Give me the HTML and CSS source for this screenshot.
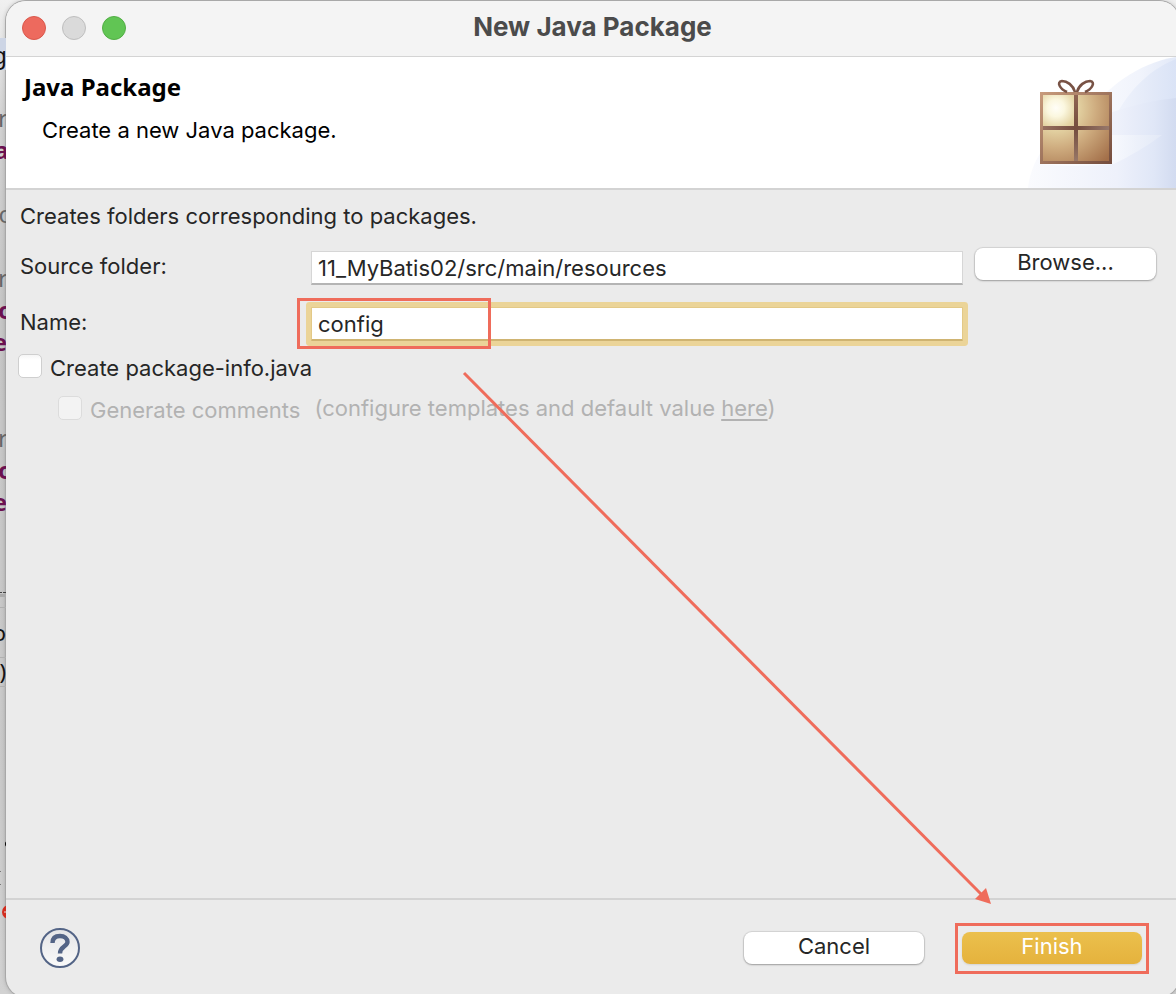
FILE: index.html
```html
<!DOCTYPE html>
<html lang="en">
<head>
<meta charset="utf-8">
<title>New Java Package</title>
<link rel="stylesheet" href="styles.css">
</head>
<body>
<svg class="editor-edge" width="6" height="994" aria-hidden="true">
  <rect class="edge-current" y="38" width="6" height="32"/>
  <rect class="edge-tab" y="594" width="6" height="3"/>
  <path class="edge-rule" d="M0 607.500H6M0 657.500H6M0 686.500H6"/>
  <g class="edge-code" text-anchor="end">
    <text class="edge-dark" x="7" y="64">g</text>
    <text x="8" y="127">r</text>
    <text class="edge-key" x="9" y="159">a</text>
    <text x="13" y="223">o</text>
    <text x="8" y="287">r</text>
    <text class="edge-key" x="13" y="319">o</text>
    <text class="edge-key" x="7" y="351">e</text>
    <text x="8" y="447">r</text>
    <text class="edge-key" x="13" y="479">o</text>
    <text class="edge-key" x="7" y="511">e</text>
    <text class="edge-dark edge-small" x="6" y="641">o</text>
    <text class="edge-dark edge-small" x="6" y="680">)</text>
  </g>
  <path d="M0 592.500H2M3 592.500H6" stroke="#444"/>
  <circle cx="8" cy="844" r="3"/>
  <path d="M0 871.500H1M0 884.500H1" stroke="#777"/>
  <circle cx="9" cy="912" r="7" fill="#d22c1e"/>
  <path d="M4 912H6" stroke="#ddd"/>
</svg>

<main class="dialog">
  <header class="titlebar">
    <div class="lights">
      <button class="light light-close" aria-label="Close"></button>
      <button class="light light-min" aria-label="Minimize" disabled></button>
      <button class="light light-zoom" aria-label="Zoom"></button>
    </div>
    <h1 class="window-title">New Java Package</h1>
  </header>

  <section class="banner">
    <div class="banner-text">
      <h2 class="banner-title">Java Package</h2>
      <p class="banner-message">Create a new Java package.</p>
    </div>
    <svg class="banner-art" width="154" height="131" viewBox="0 0 154 131" aria-hidden="true">
      <defs>
        <linearGradient id="swoosh" gradientUnits="userSpaceOnUse" x1="6" x2="154"><stop offset="0" stop-color="#fafbfe"/><stop offset=".6" stop-color="#eef1fb"/><stop offset=".85" stop-color="#e0e7f7"/><stop offset="1" stop-color="#d2dbf0"/></linearGradient>
        <linearGradient id="arc" gradientUnits="userSpaceOnUse" x1="62" x2="154"><stop offset="0" stop-color="#fafbfe"/><stop offset=".6" stop-color="#f1f4fc"/><stop offset="1" stop-color="#e2e9f8"/></linearGradient>
        <linearGradient id="inner" gradientUnits="userSpaceOnUse" x1="90" x2="154"><stop offset="0" stop-color="#f1f4fc"/><stop offset="1" stop-color="#dae3f6"/></linearGradient>
        <linearGradient id="edge" x1="0" y1="0" x2="1" y2="1"><stop offset="0" stop-color="#c89b7c"/><stop offset="1" stop-color="#734c3d"/></linearGradient>
        <radialGradient id="shine" gradientUnits="userSpaceOnUse" cx="34" cy="51" r="72"><stop offset="0" stop-color="#fffef8"/><stop offset=".12" stop-color="#fbf7df"/><stop offset=".28" stop-color="#e5d5a5"/><stop offset=".55" stop-color="#cfad80"/><stop offset="1" stop-color="#a36f49"/></radialGradient>
        <linearGradient id="ribbonH" x1="0" x2="1"><stop offset="0" stop-color="#97705f"/><stop offset=".5" stop-color="#744c3e"/><stop offset="1" stop-color="#97786b"/></linearGradient>
        <linearGradient id="ribbonV" x1="0" x2="0" y1="0" y2="1"><stop offset="0" stop-color="#906553"/><stop offset=".5" stop-color="#744c3e"/><stop offset="1" stop-color="#977767"/></linearGradient>
        <linearGradient id="ray" gradientUnits="userSpaceOnUse" x1="20" x2="140"><stop offset="0" stop-color="#fff"/><stop offset=".6" stop-color="#f8fafe"/><stop offset="1" stop-color="#e4eaf7"/></linearGradient>
      </defs>
      <path d="M62 60C85 30 116 6 154 0V131H62Z" fill="url(#arc)"/>
      <path d="M90 66C104 37 124 14 154 2V131H90Z" fill="url(#inner)"/>
      <path d="M6 131C8 113 17 91 34 80C65 62 112 45 154 41V131Z" fill="url(#swoosh)"/>
      <path d="M80 78H140C124 90 108 99 92 107C73 109 40 110 20 107Z" fill="url(#ray)" opacity=".8"/>
      <rect x="18" y="35" width="72" height="72" fill="url(#edge)"/>
      <rect x="21" y="38" width="66" height="66" fill="url(#shine)"/>
      <rect x="21" y="69" width="66" height="4" fill="url(#ribbonH)"/>
      <rect x="52" y="38" width="4" height="66" fill="url(#ribbonV)"/>
      <path d="M53 35C51 28 45 24 40 24C34 25 38 32 45 35M55 35C57 28 63 24 68 24C74 25 70 32 63 35" fill="none" stroke="#785245" stroke-width="2.600"/>
    </svg>
  </section>

  <form class="page" onsubmit="return false">
    <p class="intro">Creates folders corresponding to packages.</p>
    <div class="fields">
      <label class="field-label" for="folder">Source folder:</label>
      <input class="text-field" id="folder" type="text" value="11_MyBatis02/src/main/resources">
      <button class="push browse" type="button">Browse...</button>
      <label class="field-label" for="name">Name:</label>
      <div class="name-cell">
        <input class="text-field focused" id="name" type="text" value="config">
        <span class="mark mark-name"></span>
      </div>
    </div>
    <div class="option">
      <input class="tick" type="checkbox" id="info">
      <label class="option-label" for="info">Create package-info.java</label>
    </div>
    <div class="option option-sub">
      <input class="tick" type="checkbox" id="comments" disabled>
      <label class="option-label" for="comments">Generate comments</label>
      <p class="hint">(configure templates and default value <a class="hint-link" href="#">here</a>)</p>
    </div>
  </form>

  <footer class="actions">
    <button class="help" aria-label="Help">
      <svg width="40" height="40" viewBox="0 0 40 40">
        <defs><linearGradient id="helpFill" x1="0" y1="0" x2="0" y2="1"><stop offset="0" stop-color="#e3e4e7"/><stop offset="1" stop-color="#fafafa"/></linearGradient></defs>
        <circle cx="20" cy="20" r="19" fill="url(#helpFill)" stroke="#536486" stroke-width="2"/>
        <path d="M12.500 15C12.500 10 15.500 8 20 8C24.500 8 27.500 10.300 27.500 14C27.500 18.500 20 18.500 20 25.500" fill="none" stroke="#536486" stroke-width="4.400"/>
        <ellipse cx="20" cy="31.300" rx="3.400" ry="2.700" fill="#536486"/>
      </svg>
    </button>
    <button class="push">Cancel</button>
    <div class="finish-cell">
      <button class="push push-default">Finish</button>
      <span class="mark mark-finish"></span>
    </div>
  </footer>
</main>

<svg class="arrow" viewBox="0 0 1176 994" preserveAspectRatio="xMinYMin meet" aria-hidden="true">
  <path d="M464 373L982 895" fill="none" stroke="#ef6c5b" stroke-width="3"/>
  <path d="M991 904L986 888L975 899Z" fill="#ef6c5b"/>
</svg>
</body>
</html>
```
FILE: styles.css
```css
* { box-sizing: border-box; }

body {
  margin: 0;
  height: 100vh;
  overflow: hidden;
  position: relative;
  padding: 1px 0 0 6px;
  background: linear-gradient(#f0f0f0, #d2d2d2 120px, #c6c6c6 300px, #cacaca 800px, #d2d2d2);
  font-family: Inter, "Liberation Sans", sans-serif;
  font-size: 22px;
  color: #262626;
}

h1, h2, p { margin: 0; }

button, input { font: inherit; color: inherit; }

.editor-edge { position: absolute; left: 0; top: 0; }
.edge-code { font: 24px "Noto Sans", sans-serif; fill: #666; }
.edge-key { font-weight: 700; fill: #6b1050; }
.edge-dark { fill: #111; }
.edge-small { font-size: 22px; }
.edge-current { fill: #cdd5e5; }
.edge-tab { fill: #aaa; }
.edge-rule { stroke: #b0b0b0; }

.dialog {
  display: flex;
  flex-direction: column;
  min-height: calc(100vh + 2px);
  margin-right: -3px;
  border-radius: 20px;
  overflow: hidden;
  background: #ebebeb;
  box-shadow: 0 0 0 1px #a8a8a8, 0 0 5px rgba(0, 0, 0, .25);
}

.titlebar {
  display: grid;
  grid-template-columns: 1fr auto 1fr;
  align-items: center;
  height: 56px;
  padding: 0 16px 2px;
  background: #f4f4f4;
  border-bottom: 1px solid #d4d4d4;
}

.lights { display: flex; gap: 16px; }

.light {
  width: 24px;
  height: 24px;
  padding: 0;
  border: 1px solid #d9584c;
  border-radius: 50%;
  background: #ed6a5e;
}
.light-min { background: #dadada; border-color: #bebebe; }
.light-zoom { background: #61c554; border-color: #52ae45; }

.window-title {
  padding-bottom: 2px;
  font-size: 26px;
  line-height: 32px;
  font-weight: 700;
  color: #4b4b4b;
}

.banner {
  display: flex;
  justify-content: space-between;
  height: 133px;
  background: #fff;
  border-bottom: 2px solid #d3d3d3;
  color: #000;
}
.banner-text { padding: 14px 18px; }
.banner-title { font: 700 24px/32px "Noto Sans", sans-serif; }
.banner-message { padding: 12px 18px; line-height: 30px; }
.banner-art { flex: none; margin-right: 3px; }

.page { flex: 1; padding: 12px 22px 12px 14px; }
.intro { line-height: 28px; margin-bottom: 18px; }

.fields {
  display: grid;
  grid-template-columns: 279px 1fr 181px;
  column-gap: 12px;
  row-gap: 19px;
  grid-auto-rows: 37px;
  padding-right: 1px;
}
.field-label { line-height: 37px; }

.text-field {
  width: 100%;
  height: 34px;
  align-self: end;
  padding: 0 6px;
  border: 1px solid #d6d6d6;
  border-bottom: 2px solid #b4b4b4;
  background: #fff;
  outline: none;
}
.name-cell { position: relative; display: flex; }
.focused {
  border: 1px solid #e3c987;
  border-bottom: 2px solid #cfb472;
  box-shadow: 0 0 0 5px #ebd498;
  border-radius: 1px;
}

.push {
  width: 180px;
  height: 32px;
  padding: 0 0 4px;
  border: 0;
  border-radius: 8px;
  background: #fff;
  line-height: 28px;
  box-shadow: 0 0 1px 1px rgba(0, 0, 0, .1), 0 1px 2px rgba(0, 0, 0, .25);
}
.browse { width: 100%; }
.push-default {
  color: #fff;
  background: linear-gradient(#ebc04d, #e5b23d);
  box-shadow: 0 1px 2px rgba(0, 0, 0, .1);
}

.option {
  display: flex;
  align-items: flex-start;
  gap: 8px;
  margin: 13px 0 0 -2px;
}
.option-label { line-height: 28px; }
.option-sub { margin: 14px 0 0 38px; color: #b2b2b2; }

.tick {
  appearance: none;
  flex: none;
  width: 24px;
  height: 24px;
  margin: 0;
  border: 1px solid #cfcfcf;
  border-radius: 5px;
  background: linear-gradient(#f6f6f6, #fff 5px);
}
.tick:disabled { background: #f3f3f3; border-color: #dcdcdc; }

.hint { padding-left: 6px; line-height: 24px; }
.hint-link { color: inherit; text-underline-offset: 3px; }

.actions {
  display: flex;
  align-items: center;
  height: 99px;
  padding: 0 37px 1px 34px;
  border-top: 2px solid #d3d3d3;
}
.help { display: flex; margin-right: auto; padding: 0; border: 0; background: none; }
.finish-cell { position: relative; display: flex; margin-left: 38px; }

.mark { position: absolute; border: 3px solid #ef6c5b; pointer-events: none; }
.mark-name { left: -14px; top: -6px; width: 194px; height: 51px; }
.mark-finish { inset: -9px -7px -10px; }

.arrow { position: absolute; left: 0; top: 0; width: 100%; pointer-events: none; }
```
